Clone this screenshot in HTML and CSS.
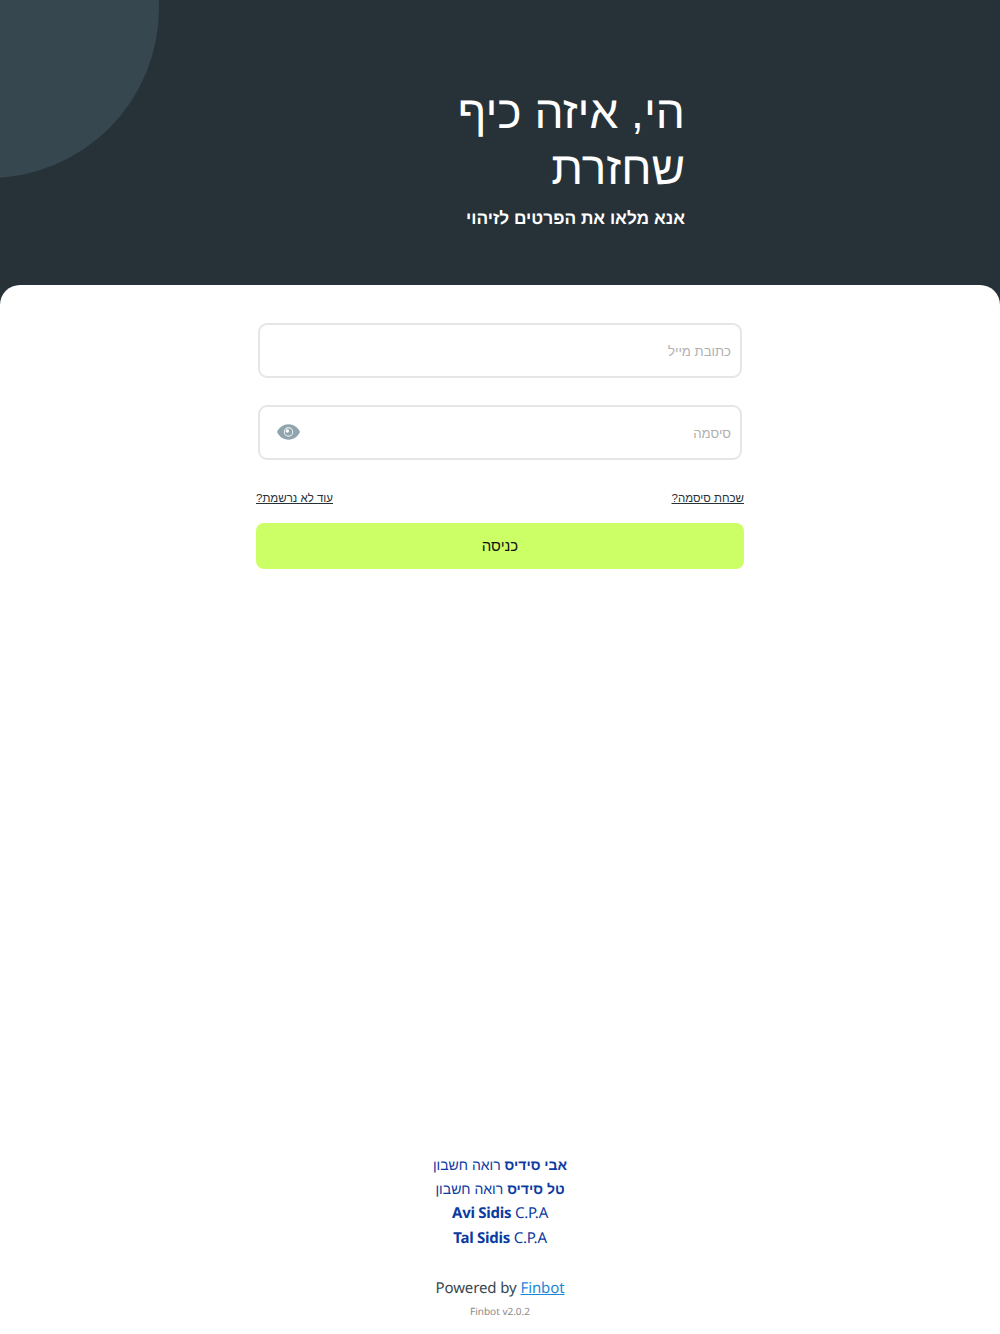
FILE: index.html
```html
<!DOCTYPE html>
<html lang="he" dir="rtl">
<head>
  <meta charset="UTF-8" />
  <meta name="viewport" content="width=device-width, initial-scale=1.0" />
  <title>Finbot</title>
  <link rel="stylesheet" href="styles.css">
</head>
<body>
  <header class="hero">
    <div class="hero-circle"></div>
    <div class="hero-text">
      <h1>הי, איזה כיף שחזרת</h1>
      <p>אנא מלאו את הפרטים לזיהוי</p>
    </div>
  </header>

  <main class="card">
    <form class="login">
      <div class="field">
        <input type="text" placeholder="כתובת מייל" />
      </div>
      <div class="field">
        <input type="password" placeholder="סיסמה" />
        <svg class="eye" viewBox="0 0 24 16" aria-hidden="true">
          <path fill="#90a4ae" fill-rule="evenodd" d="M12 0C6.600 0 2.200 3.300 0 8c2.200 4.700 6.600 8 12 8s9.800-3.300 12-8c-2.200-4.700-6.600-8-12-8zm0 12.900a4.900 4.900 0 1 1 0-9.800 4.900 4.900 0 0 1 0 9.800z"/>
          <path fill="#90a4ae" fill-rule="evenodd" d="M12 4a4 4 0 1 0 0 8 4 4 0 0 0 0-8zm-1.200 1.100a1.800 1.800 0 1 1 0 3.600 1.800 1.800 0 0 1 0-3.600z"/>
        </svg>
      </div>
      <div class="links">
        <a href="#">שכחת סיסמה?</a>
        <a href="#">עוד לא נרשמת?</a>
      </div>
      <button type="button">כניסה</button>
    </form>

    <footer class="footer">
      <div class="credits">
        <div class="credit-he"><strong>אבי סידיס</strong> רואה חשבון</div>
        <div class="credit-he"><strong>טל סידיס</strong> רואה חשבון</div>
        <div class="credit-en" dir="ltr"><strong>Avi Sidis</strong> C.P.A</div>
        <div class="credit-en" dir="ltr"><strong>Tal Sidis</strong> C.P.A</div>
      </div>
      <div class="powered" dir="ltr">Powered by <a href="#">Finbot</a></div>
      <div class="version" dir="ltr">Finbot v2.0.2</div>
    </footer>
  </main>
</body>
</html>
```

FILE: styles.css
```css
* {
  box-sizing: border-box;
}

body {
  margin: 0;
  height: 100vh;
  display: flex;
  flex-direction: column;
  font-family: "Liberation Sans", sans-serif;
  text-rendering: geometricPrecision;
  background-color: #263238;
  color: #263238;
  overflow: hidden;
}

.hero {
  position: relative;
  height: 285px;
  flex-shrink: 0;
  display: flex;
  justify-content: center;
  overflow: hidden;
}

.hero-circle {
  position: absolute;
  top: -162px;
  left: -181px;
  width: 340px;
  height: 340px;
  border-radius: 50%;
  background-color: #37474f;
}

.hero-text {
  position: relative;
  width: 370px;
  padding-top: 84px;
  color: #fff;
}

.hero-text h1 {
  margin: 0;
  font-size: 46px;
  line-height: 56px;
  font-weight: 400;
}

.hero-text p {
  margin: 10px 0 0;
  font-size: 17.300px;
  line-height: 24px;
  font-weight: 700;
}

.card {
  flex: 1;
  display: flex;
  flex-direction: column;
  align-items: center;
  background-color: #fff;
  border-radius: 20px 20px 0 0;
  padding-top: 38px;
}

.login {
  width: 488px;
}

.field {
  position: relative;
  margin: 0 2px 27px;
}

.field input {
  display: block;
  width: 100%;
  height: 55px;
  padding: 2px 9px 0;
  border: 2px solid #e6e6e6;
  border-radius: 9px;
  background-color: #fff;
  font-family: inherit;
  font-size: 13.200px;
  outline: none;
}

.field input::placeholder {
  color: #b0b0b0;
}

.eye {
  position: absolute;
  left: 19px;
  top: 19px;
  width: 23px;
  height: 16px;
}

.links {
  display: flex;
  justify-content: space-between;
  margin-top: 31px;
  font-size: 11.500px;
  line-height: 16px;
}

.links a {
  color: #263238;
}

button {
  display: block;
  width: 100%;
  height: 46px;
  margin-top: 16px;
  padding-bottom: 2px;
  border: none;
  border-radius: 8px;
  background-color: #ccff66;
  color: #111;
  font-family: inherit;
  font-size: 15px;
}

.footer {
  margin-top: auto;
  padding-bottom: 16px;
  text-align: center;
}

.credits {
  font-size: 14px;
  line-height: 24.300px;
  color: #0b3aa0;
}

.credit-en {
  font-family: "Noto Sans", sans-serif;
  font-size: 15px;
  letter-spacing: -0.250px;
}

.powered {
  margin-top: 26px;
  font-family: "Noto Sans", sans-serif;
  font-size: 15px;
  line-height: 24px;
  letter-spacing: -0.100px;
  color: #37474f;
}

.powered a {
  color: #1e88d8;
}

.version {
  margin-top: 4px;
  font-family: "Noto Sans", sans-serif;
  font-size: 10px;
  line-height: 14px;
  color: #8a8a8a;
}
```
